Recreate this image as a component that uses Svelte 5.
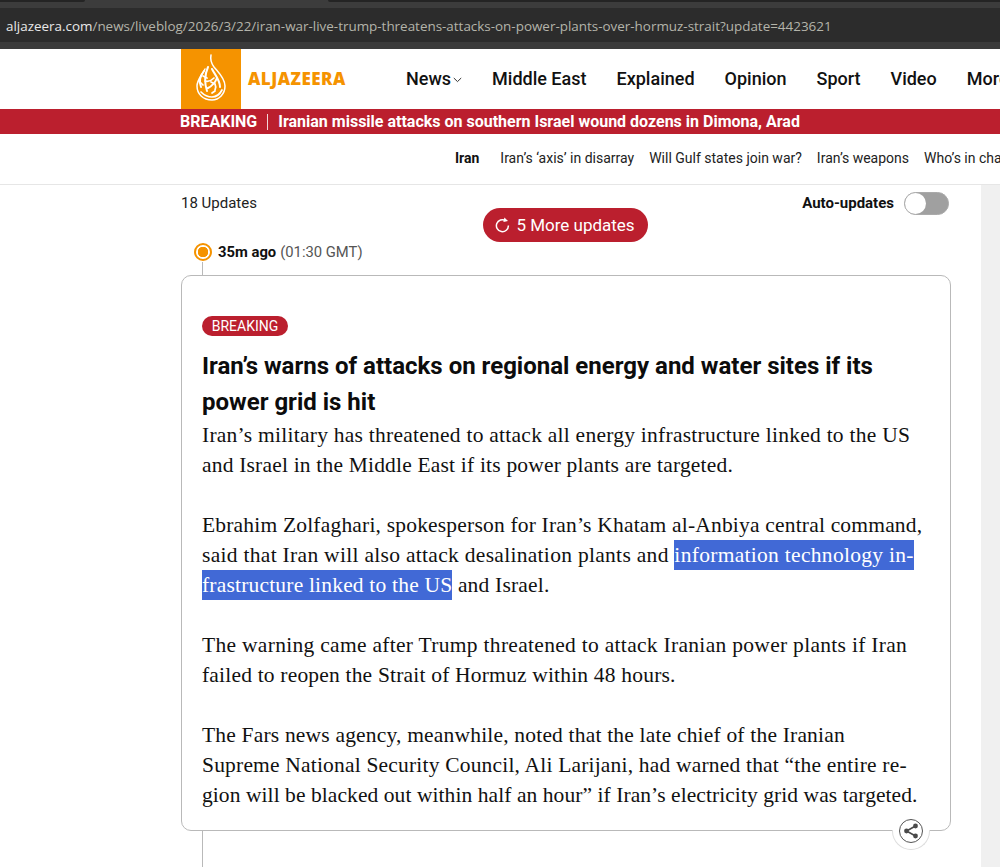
<script>
  const navItems = ['Middle East', 'Explained', 'Opinion', 'Sport', 'Video', 'More'];
  const topics = ['Iran’s ‘axis’ in disarray', 'Will Gulf states join war?', 'Iran’s weapons', 'Who’s in charge'];
</script>

<div class="page">
  <div class="browser">
    <div class="tabs"><span class="tab-a"></span><span class="tab-b"></span></div>
    <div class="urlbar">
      <span class="host">aljazeera.com</span><span class="path">/news/liveblog/2026/3/22/iran-war-live-trump-threatens-attacks-on-power-plants-over-hormuz-strait?update=4423621</span>
    </div>
  </div>

  <header class="site-header">
    <div class="logo-box">
      <svg width="60" height="60" viewBox="0 0 60 60" fill="none" stroke="#fff" stroke-linecap="round">
        <path d="M30 6c-1 5 0 8 3 12 4 5 11 11 11 19 0 8-6 14-13 14-9 0-15-6-15-14 0-6 5-11 8-17" stroke-width="1.5" />
        <path d="M23 22c-4 5-5 11-3 16M27 18c-3 7-4 15-1 24M31 20c3 6 8 11 8 18M36 29c-2 5-5 8-9 10" stroke-width="2" />
        <path d="M20 43c3 3 7 5 11 5 4 0 8-3 10-7M24 32c3 1 6 0 9-3M19 33l3 3M31 44l3-2M34 35c1 2 1 4 0 6M22 27l4 2M30 33l4 2" stroke-width="1.7" />
      </svg>
    </div>
    <span class="wordmark">ALJAZEERA</span>
    <nav class="main-nav">
      <span class="nav-news">News
        <svg width="9" height="6" viewBox="0 0 9 6" fill="none" stroke="#333" stroke-width="1"><path d="M.8 1l3.7 3.6L8.2 1" /></svg>
      </span>
      {#each navItems as item}
        <span>{item}</span>
      {/each}
    </nav>
  </header>

  <div class="breaking-bar">
    <strong>BREAKING</strong>
    <span class="divider"></span>
    <strong>Iranian missile attacks on southern Israel wound dozens in Dimona, Arad</strong>
  </div>

  <div class="subnav">
    <b>Iran</b>
    {#each topics as topic}
      <span>{topic}</span>
    {/each}
  </div>

  <div class="content">
    <main class="feed">
      <div class="feed-top">
        <span class="count">18 Updates</span>
        <div class="auto">
          <b>Auto-updates</b>
          <span class="toggle"><span class="knob"></span></span>
        </div>
      </div>

      <div class="more-row">
        <span class="more-btn">
          <svg width="15" height="16" viewBox="0 0 15 16" fill="none" stroke="#fff" stroke-width="1.5">
            <path d="M10.6 3.6A6 6 0 1 0 13.4 8.6" />
            <path d="M9.4.4l3.6 3.5-4.6 1.2z" fill="#fff" stroke="none" />
          </svg>
          5 More updates
        </span>
      </div>

      <div class="stamp">
        <span class="dot"></span>
        <b>35m ago</b> <span class="gmt">(01:30 GMT)</span>
      </div>

      <article class="card">
        <span class="badge">BREAKING</span>
        <h2>Iran’s warns of attacks on regional energy and water sites if its<br />power grid is hit</h2>
        <p><span class="loose">Iran’s military has threatened to attack all energy infrastructure linked to the US</span><br />and Israel in the Middle East if its power plants are targeted.</p>
        <p>Ebrahim Zolfaghari, spokesperson for Iran’s Khatam al-Anbiya central command,<br /><span class="looser">said that Iran will also attack desalination plants and <mark>information technology in-</mark></span><br /><mark>frastructure linked to the US</mark> and Israel.</p>
        <p><span class="looser">The warning came after Trump threatened to attack Iranian power plants if Iran</span><br />failed to reopen the Strait of Hormuz within 48 hours.</p>
        <p>The Fars news agency, meanwhile, noted that the late chief of the Iranian<br />Supreme National Security Council, Ali Larijani, had warned that “the entire re-<br /><span class="tight">gion will be blacked out within half an hour” if Iran’s electricity grid was targeted.</span></p>

        <span class="share"></span>
        <span class="share-btn">
          <svg width="16" height="16" viewBox="0 0 16 16" fill="#4a4a4a" stroke="#4a4a4a">
            <path d="M12.5 3L3.5 8l9 5" fill="none" stroke-width="1.6" />
            <circle cx="12.5" cy="3" r="2.4" stroke="none" />
            <circle cx="3.5" cy="8" r="2.4" stroke="none" />
            <circle cx="12.5" cy="13" r="2.4" stroke="none" />
          </svg>
        </span>
      </article>
      <div class="line-below"></div>
    </main>
    <aside class="scroll-strip"></aside>
  </div>
</div>

<style>
  :global(body) {
    margin: 0;
    background: #fff;
  }

  .page {
    width: 1000px;
    height: 867px;
    overflow: hidden;
    font-family: Roboto, "Liberation Sans", sans-serif;
    color: #0c0c0c;
    white-space: nowrap;
  }

  .browser {
    height: 49px;
    background: #3b3b3b;
    display: flex;
    flex-direction: column;
  }

  .tabs {
    height: 8px;
    background: #3c3c3c;
    display: flex;
    justify-content: space-between;
  }

  .tab-a {
    width: 85px;
    height: 2px;
    background: #242424;
    border-radius: 0 0 6px 0;
  }

  .tab-b {
    width: 672px;
    height: 2px;
    background: #242424;
    border-radius: 0 0 0 6px;
  }

  .urlbar {
    height: 33px;
    padding: 1px 0 0 6px;
    background: #2c2c2c;
    display: flex;
    align-items: center;
    font-family: "Open Sans", "Noto Sans", sans-serif;
    font-size: 13.43px;
  }

  .host {
    color: #e8e8e8;
  }

  .path {
    color: #b4b4aa;
  }

  .site-header {
    height: 60px;
    display: flex;
    align-items: center;
    padding-left: 181px;
  }

  .logo-box {
    width: 60px;
    height: 60px;
    background: #f59300;
    flex: none;
  }

  .wordmark {
    margin: 0 0 1px 7px;
    width: 157px;
    flex: none;
    font-family: "Open Sans", "Noto Sans", sans-serif;
    font-weight: 800;
    font-size: 17px;
    letter-spacing: 0.5px;
    color: #f59300;
  }

  .main-nav {
    display: flex;
    gap: 30px;
    margin-bottom: 2px;
    font-size: 18px;
    font-weight: 500;
    color: #111;
  }

  .nav-news {
    display: flex;
    align-items: center;
    gap: 2px;
    margin-left: 1px;
  }

  .nav-news svg {
    margin-top: 3px;
  }

  .breaking-bar {
    height: 25px;
    background: #bb1f2e;
    color: #fff;
    display: flex;
    align-items: center;
    padding-left: 180px;
    font-size: 16px;
  }

  .breaking-bar strong {
    font-weight: 700;
  }

  .divider {
    width: 1px;
    height: 16px;
    background: #f3d5d8;
    margin: 0 10px;
  }

  .subnav {
    height: 48px;
    padding: 0 0 2px 455px;
    border-bottom: 1px solid #e6e6e6;
    display: flex;
    align-items: center;
    gap: 15px;
    font-size: 14px;
    color: #222;
  }

  .subnav b {
    margin-right: 6px;
    color: #111;
  }

  .content {
    display: flex;
    height: 682px;
  }

  .feed {
    width: 981px;
    padding-left: 181px;
    box-sizing: border-box;
  }

  .feed-top {
    width: 768px;
    height: 35px;
    display: flex;
    justify-content: space-between;
    align-items: center;
    font-size: 15px;
  }

  .count {
    color: #222;
  }

  .auto {
    display: flex;
    align-items: center;
    gap: 10px;
  }

  .auto b {
    font-size: 15px;
    font-weight: 700;
    color: #111;
  }

  .toggle {
    width: 45px;
    height: 23px;
    margin-top: 2px;
    box-sizing: border-box;
    border: 1px solid #aaa;
    background: #a0a0a0;
    border-radius: 12px;
    display: flex;
  }

  .knob {
    width: 21px;
    height: 21px;
    background: #fff;
    border-radius: 50%;
  }

  .more-row {
    width: 768px;
    margin-top: -12px;
    display: flex;
    justify-content: center;
  }

  .more-btn {
    height: 34px;
    width: 165px;
    box-sizing: border-box;
    background: #bb1f2e;
    color: #fff;
    border-radius: 17px;
    display: flex;
    align-items: center;
    justify-content: center;
    gap: 6px;
    font-size: 17px;
  }

  .stamp {
    margin-left: 13px;
    height: 20px;
    display: flex;
    align-items: center;
    font-size: 14.8px;
    gap: 4px;
    color: #111;
  }

  .gmt {
    color: #555;
  }

  .dot {
    width: 18px;
    height: 18px;
    box-sizing: border-box;
    border: 2px solid #f59300;
    border-radius: 50%;
    background: radial-gradient(circle, #f59300 0 5px, #fff 5.5px);
    margin-right: 2px;
  }

  .card {
    position: relative;
    width: 770px;
    height: 556px;
    margin-top: 13px;
    box-sizing: border-box;
    border: 1px solid #b9b9b9;
    border-radius: 10px;
    padding: 40px 20px 0;
  }

  .card::before {
    content: "";
    position: absolute;
    left: 20px;
    top: -14px;
    width: 1px;
    height: 13px;
    background: #b9b9b9;
  }

  .badge {
    display: block;
    width: 86px;
    height: 20px;
    line-height: 20px;
    text-align: center;
    background: #bb1f2e;
    color: #fff;
    font-size: 14px;
    border-radius: 10px;
  }

  h2 {
    margin: 12px 0 0;
    font-size: 24px;
    line-height: 36px;
    font-weight: 700;
    color: #0c0c0c;
  }

  p {
    margin: 0 0 30px;
    font-family: "Liberation Serif", serif;
    font-size: 21.5px;
    letter-spacing: 0.19px;
    line-height: 30px;
    color: #111;
  }

  .loose {
    letter-spacing: 0.25px;
  }

  .looser {
    letter-spacing: 0.3px;
  }

  .tight {
    letter-spacing: 0.07px;
  }

  mark {
    background: #4169d6;
    color: #fff;
    padding: 3px 0;
  }

  .share {
    position: absolute;
    right: 20px;
    bottom: -20px;
    width: 36px;
    height: 19px;
    background: #fff;
    border: 1px solid #ddd;
    border-top: none;
    border-radius: 0 0 19px 19px;
  }

  .share-btn {
    position: absolute;
    right: 27px;
    bottom: -13px;
    width: 24px;
    height: 24px;
    box-sizing: border-box;
    background: #fff;
    border: 1px solid #555;
    border-radius: 50%;
    display: flex;
    align-items: center;
    justify-content: center;
  }

  .line-below {
    width: 1px;
    height: 40px;
    margin-left: 21px;
    background: #b9b9b9;
  }

  .scroll-strip {
    width: 19px;
    background: #f0f0f0;
  }
</style>
